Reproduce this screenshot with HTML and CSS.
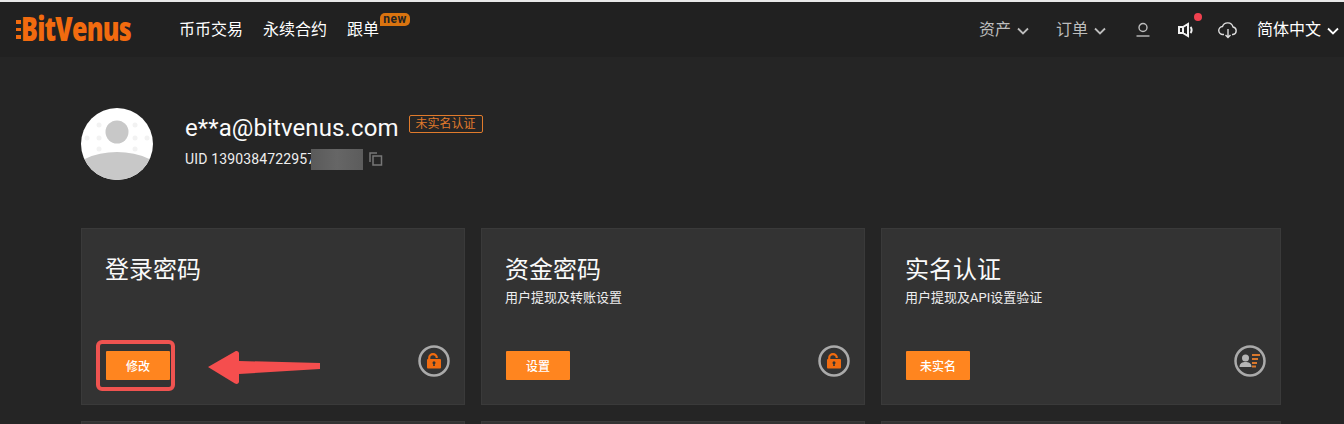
FILE: index.html
```html
<!DOCTYPE html>
<html lang="zh-CN">
<head>
  <meta charset="UTF-8">
  <title>BitVenus</title>
  <link rel="stylesheet" href="styles.css">
</head>
<body>
  <header class="topbar">
    <div class="logo"><span class="logo-dots"></span><span class="logo-text">BitVenus</span></div>
    <nav class="nav-left">
      <a>币币交易</a>
      <a>永续合约</a>
      <a class="nav-new">跟单<span class="new-tag">new</span></a>
    </nav>
    <nav class="nav-right">
      <a class="nav-dim">资产<svg class="chev" viewBox="0 0 12 8"><path d="M1 1.5 6 6.5 11 1.5"/></svg></a>
      <a class="nav-dim nav-order">订单<svg class="chev" viewBox="0 0 12 8"><path d="M1 1.5 6 6.5 11 1.5"/></svg></a>
      <svg class="nav-icon user-icon" viewBox="0 0 16 16"><circle cx="8" cy="5.5" r="4"/><path d="M1.5 14h13"/></svg>
      <span class="sound">
        <svg class="nav-icon" viewBox="0 0 16 16"><path d="M1 5h4v6H1zM5 5l5-3v12l-5-3z"/><path d="M12.5 5c1.5 1.5 1.5 4.5 0 6"/></svg>
        <i class="red-dot"></i>
      </span>
      <svg class="nav-icon cloud-icon" viewBox="0 0 20 18"><path d="M6 13.5H5a4 4 0 0 1-.5-8 5.5 5.5 0 0 1 10.5 .5 3.8 3.8 0 0 1 0 7.5h-1"/><path d="M10 8v8.5M7.5 14l2.5 2.5 2.500-2.500"/></svg>
      <a class="nav-lang">简体中文<svg class="chev" viewBox="0 0 12 8"><path d="M1 1.5 6 6.5 11 1.5"/></svg></a>
    </nav>
  </header>

  <main class="content">
    <section class="profile">
      <svg class="avatar" viewBox="0 0 72 72">
        <defs><clipPath id="av"><circle cx="36" cy="36" r="36"/></clipPath></defs>
        <g clip-path="url(#av)">
          <rect width="72" height="72" fill="#fff"/>
          <g fill="#f2f2f2">
            <circle cx="18" cy="17" r="2.5"/><circle cx="54" cy="17" r="2.5"/>
            <circle cx="6" cy="30" r="2.5"/><circle cx="18" cy="30" r="2.5"/><circle cx="54" cy="30" r="2.5"/><circle cx="66" cy="30" r="2.5"/>
            <circle cx="18" cy="41" r="2.5"/><circle cx="54" cy="41" r="2.5"/>
          </g>
          <circle cx="36" cy="24" r="11.5" fill="#c8c8c8"/>
          <ellipse cx="36" cy="66" rx="44" ry="22" fill="#c8c8c8"/>
        </g>
      </svg>
      <div class="profile-info">
        <div class="email-row">
          <span class="email">e**a@bitvenus.com</span>
          <span class="kyc-tag">未实名认证</span>
        </div>
        <div class="uid-row">
          <span class="uid">UID 1390384722957</span>
          <span class="uid-blur"></span>
          <svg class="copy-icon" viewBox="0 0 14 14"><path d="M1 10V1h7"/><rect x="4" y="4" width="8.5" height="9"/></svg>
        </div>
      </div>
    </section>

    <section class="cards">
      <article class="card">
        <h3>登录密码</h3>
        <p></p>
        <div class="card-foot">
          <span class="btn-wrap"><button class="btn">修改</button></span>
          <svg class="card-arrow" viewBox="0 0 112 33"><path d="M0 16 27 .5c2-1 4 0 4 2V10l81 2v6l-81 5v7.5c0 2-2 3-4 2z"/></svg>
          <svg class="badge" viewBox="0 0 32 32"><use href="#lock"/></svg>
        </div>
      </article>
      <article class="card">
        <h3>资金密码</h3>
        <p>用户提现及转账设置</p>
        <div class="card-foot">
          <button class="btn">设置</button>
          <svg class="badge" viewBox="0 0 32 32"><use href="#lock"/></svg>
        </div>
      </article>
      <article class="card">
        <h3>实名认证</h3>
        <p>用户提现及API设置验证</p>
        <div class="card-foot">
          <button class="btn">未实名</button>
          <svg class="badge" viewBox="0 0 32 32">
            <circle cx="16" cy="16" r="14.5" fill="none" stroke="#aaa" stroke-width="2.5"/>
            <circle cx="11.5" cy="13" r="3.5" fill="#b5b5b5"/>
            <path d="M5.5 22c0-4 3-5 6-5s6 1 6 5z" fill="#b5b5b5"/>
            <path d="M18 9h8v2h-8zM18 13h6v2h-6zM18 17h5v2h-5zM18 20.5h4v2h-4z" fill="#d9782d"/>
          </svg>
        </div>
      </article>
      <article class="card"></article>
      <article class="card"></article>
      <article class="card"></article>
    </section>
  </main>

  <svg class="sprite" width="0" height="0">
    <symbol id="lock" viewBox="0 0 32 32">
      <circle cx="16" cy="16" r="14.5" fill="none" stroke="#aaa" stroke-width="2.5"/>
      <path d="M11.2 15v-2a3.8 3.8 0 0 1 7.6 0" fill="none" stroke="#f26b0f" stroke-width="2.2"/>
      <path d="M10 14h12a1 1 0 0 1 1 1v7.500a1 1 0 0 1-1 1H10a1 1 0 0 1-1-1V15a1 1 0 0 1 1-1z" fill="#f26b0f"/>
      <circle cx="16" cy="17.800" r="1.500" fill="#333"/>
      <path d="M15.500 18h1l.4 3h-1.800z" fill="#333"/>
    </symbol>
  </svg>
</body>
</html>
```

FILE: styles.css
```css
* {
  box-sizing: border-box;
}
body {
  margin: 0;
  height: 424px;
  overflow: hidden;
  background-color: #252525;
  color: #fff;
  font-family: Roboto, "Noto Sans CJK SC", sans-serif;
  border-top: 2px solid #e8e8e8;
}
.topbar {
  display: flex;
  align-items: center;
  height: 55px;
  background-color: #212121;
  padding-left: 16px;
}
.logo {
  display: flex;
  align-items: center;
  width: 163px;
  margin-top: -1px;
}
.logo-dots {
  width: 5px;
  height: 19px;
  background: repeating-linear-gradient(#f26b0f 0 4px, transparent 4px 7.5px);
}
.logo-text {
  display: inline-block;
  font-family: "Open Sans", sans-serif;
  font-weight: 800;
  font-size: 33px;
  line-height: 30px;
  letter-spacing: -1px;
  color: #f26b0f;
  transform: scaleX(0.76);
  transform-origin: left center;
}
.nav-left {
  display: flex;
  gap: 20px;
  font-size: 16px;
  line-height: 22px;
}
.nav-new {
  position: relative;
}
.new-tag {
  position: absolute;
  left: 33px;
  top: -6px;
  width: 30px;
  height: 13px;
  border-radius: 5px 5px 5px 0;
  background-color: #d9730f;
  color: #222;
  font-size: 12px;
  font-weight: 700;
  letter-spacing: 0.5px;
  line-height: 12px;
  text-align: center;
}
.nav-right {
  display: flex;
  align-items: center;
  margin-left: auto;
  font-size: 16px;
  line-height: 22px;
  color: #fff;
}
.nav-dim {
  display: flex;
  align-items: center;
  color: #bdbdbd;
  margin-right: 27px;
}
.nav-order {
  margin-right: 29px;
}
.nav-lang {
  display: flex;
  align-items: center;
  margin-left: 19px;
  margin-right: 5px;
}
.chev {
  width: 12px;
  height: 8px;
  margin-left: 6px;
  margin-top: 2px;
  fill: none;
  stroke: currentColor;
  stroke-width: 1.8;
}
.nav-icon {
  width: 16px;
  height: 16px;
  fill: none;
  stroke: #ddd;
  stroke-width: 1.4;
}
.user-icon {
  margin-right: 27px;
  stroke: #bdbdbd;
}
.sound {
  position: relative;
  display: flex;
  margin-right: 24px;
}
.sound .nav-icon {
  stroke: #f2f2f2;
  stroke-width: 2;
}
.red-dot {
  position: absolute;
  left: 16px;
  top: -9px;
  width: 8px;
  height: 8px;
  border-radius: 50%;
  background-color: #f0414f;
}
.cloud-icon {
  width: 20px;
  height: 18px;
}
.content {
  height: 367px;
  overflow: hidden;
  padding: 51px 63px 0 81px;
}
.profile {
  display: flex;
  align-items: center;
  gap: 32px;
}
.avatar {
  width: 72px;
  height: 72px;
  flex: none;
}
.profile-info {
  margin-top: -6px;
}
.email-row {
  display: flex;
  align-items: center;
  gap: 10px;
  margin-top: 1px;
}
.email {
  font-size: 24px;
  line-height: 28px;
  letter-spacing: 0.1px;
  color: #fafafa;
}
.kyc-tag {
  border: 1px solid #e07b2c;
  border-radius: 2px;
  color: #e07b2c;
  font-size: 12px;
  line-height: 16px;
  padding: 0 6px;
  margin-top: -7px;
}
.uid-row {
  display: flex;
  align-items: center;
  margin-top: 7px;
  font-size: 14px;
  line-height: 18px;
}
.uid {
  color: #eee;
  letter-spacing: 0.15px;
  white-space: nowrap;
}
.uid-blur {
  width: 52px;
  height: 21px;
  margin-left: -4px;
  background: linear-gradient(90deg, #5a5a5a, #666 50%, #5c5c5c);
}
.copy-icon {
  width: 14px;
  height: 14px;
  margin-left: 6px;
  fill: none;
  stroke: #777;
  stroke-width: 1.5;
}
.cards {
  display: grid;
  grid-template-columns: 384px 384px 400px;
  grid-auto-rows: 177px;
  gap: 16px;
  margin-top: 48px;
}
.card {
  display: flex;
  flex-direction: column;
  padding: 26px 14px 24px 23px;
  background-color: #333;
  border: 1px solid #3a3a3a;
}
.card h3 {
  margin: 0;
  font-size: 24px;
  font-weight: 400;
  line-height: 30px;
  color: #fafafa;
}
.card p {
  margin: 3px 0 0;
  font-size: 13px;
  line-height: 20px;
  color: #eee;
}
.card-foot {
  position: relative;
  display: flex;
  align-items: flex-end;
  justify-content: space-between;
  margin-top: auto;
  padding-left: 1px;
}
.btn {
  width: 64px;
  height: 29px;
  padding: 0;
  border: none;
  border-radius: 1px;
  background-color: #ff851f;
  color: #fff;
  font-family: "Noto Sans CJK SC", sans-serif;
  font-size: 12px;
  font-weight: 500;
}
.btn-wrap {
  display: flex;
  margin: -11px -5px -11px -10px;
  padding: 7px 1px 7px 6px;
  border: 4px solid #ef5350;
  border-radius: 6px;
}
.card-arrow {
  position: absolute;
  left: 103px;
  top: 6px;
  width: 112px;
  height: 33px;
  fill: #f54e4e;
}
.badge {
  width: 32px;
  height: 32px;
  margin-bottom: 3px;
}
.sprite {
  position: absolute;
}
```
